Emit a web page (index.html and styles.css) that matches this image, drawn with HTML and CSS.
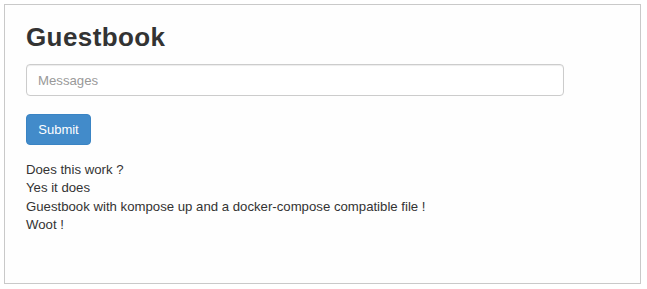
FILE: index.html
```html
<!DOCTYPE html>
<html lang="en">
<head>
<meta charset="utf-8">
<title>Guestbook</title>
<link rel="stylesheet" href="styles.css">
</head>
<body>
<div class="frame">
  <h1 class="title">Guestbook</h1>
  <form class="form">
    <input class="field" type="text" placeholder="Messages">
    <button class="btn" type="button">Submit</button>
  </form>
  <div class="entries">
    <div class="entry">Does this work ?</div>
    <div class="entry">Yes it does</div>
    <div class="entry">Guestbook with kompose up and a docker-compose compatible file !</div>
    <div class="entry">Woot !</div>
  </div>
</div>
</body>
</html>
```

FILE: styles.css
```css
html, body {
  margin: 0;
  padding: 0;
  background: #ffffff;
}
body {
  padding: 4px;
  font-family: "Liberation Sans", Arial, sans-serif;
  color: #333333;
}
.frame {
  box-sizing: border-box;
  width: 637px;
  height: 280px;
  border: 1px solid #c9c9c9;
  background: #fefefe;
  padding: 18px 21px 0 21px;
}
.title {
  margin: 0 0 12px 0;
  font-size: 26px;
  line-height: 29px;
  font-weight: bold;
  letter-spacing: 0.4px;
  color: #333333;
}
.form {
  display: flex;
  flex-direction: column;
  align-items: flex-start;
  gap: 18px;
  margin: 0;
}
.field {
  box-sizing: border-box;
  width: 538px;
  height: 32px;
  margin: 0;
  padding: 0 11px;
  border: 1px solid #cccccc;
  border-radius: 4px;
  background: #ffffff;
  box-shadow: inset 0 1px 1px rgba(0,0,0,0.075);
  font-family: "Liberation Sans", Arial, sans-serif;
  font-size: 13.2px;
  color: #555555;
  outline: none;
}
.field::placeholder {
  color: #999999;
}
.btn {
  box-sizing: border-box;
  width: 65px;
  height: 31px;
  margin: 0;
  padding: 0;
  border: 1px solid #3a84c4;
  border-radius: 4px;
  background: #428bca;
  color: #ffffff;
  font-family: "Liberation Sans", Arial, sans-serif;
  font-size: 13px;
  cursor: pointer;
}
.entries {
  margin-top: 16px;
  font-size: 13.2px;
  line-height: 18.3px;
}
```
